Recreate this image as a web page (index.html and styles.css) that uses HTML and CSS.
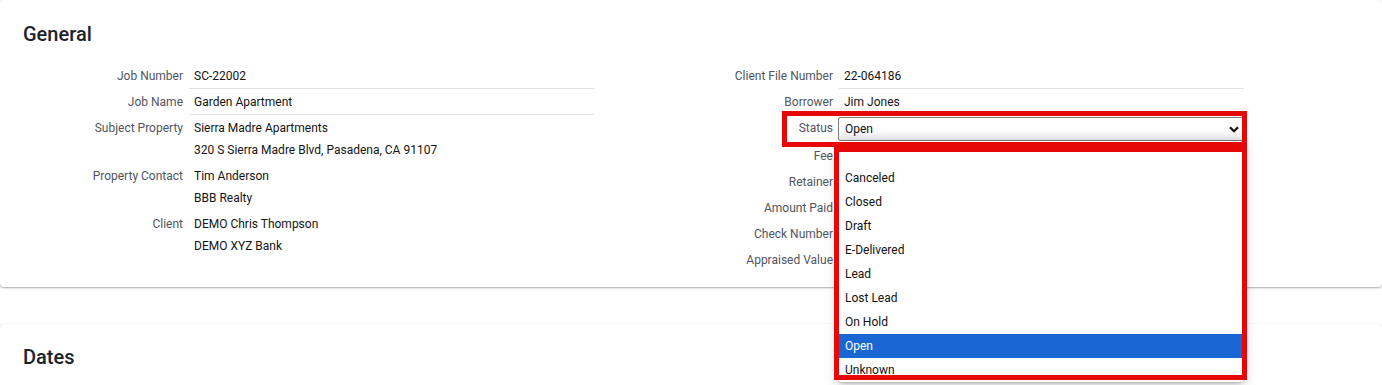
FILE: index.html
```html
<!DOCTYPE html>
<html lang="en">
<head>
<meta charset="utf-8">
<title>Job</title>
<link rel="stylesheet" href="styles.css">
</head>
<body>
<div class="page">
  <section class="card general">
    <h2 class="card-title">General</h2>
    <div class="cols">
      <div class="col">
        <div class="row"><div class="label">Job Number</div><div class="value bordered">SC-22002</div></div>
        <div class="row"><div class="label">Job Name</div><div class="value bordered">Garden Apartment</div></div>
        <div class="row"><div class="label">Subject Property</div><div class="value"><div>Sierra Madre Apartments</div><div>320 S Sierra Madre Blvd, Pasadena, CA 91107</div></div></div>
        <div class="row"><div class="label">Property Contact</div><div class="value"><div>Tim Anderson</div><div>BBB Realty</div></div></div>
        <div class="row"><div class="label">Client</div><div class="value"><div>DEMO Chris Thompson</div><div>DEMO XYZ Bank</div></div></div>
      </div>
      <div class="col">
        <div class="row"><div class="label">Client File Number</div><div class="value bordered">22-064186</div></div>
        <div class="row"><div class="label">Borrower</div><div class="value bordered">Jim Jones</div></div>
        <div class="row"><div class="label">Status</div>
          <div class="value select-cell">
            <div class="select">
              <span>Open</span>
              <svg class="chevron" width="10" height="7" viewBox="0 0 10 7"><path d="M1 1.2 L5 5.2 L9 1.2" fill="none" stroke="#111" stroke-width="2.2"/></svg>
              <ul class="popup">
                <li class="opt">&nbsp;</li>
                <li class="opt">Canceled</li>
                <li class="opt">Closed</li>
                <li class="opt">Draft</li>
                <li class="opt">E-Delivered</li>
                <li class="opt">Lead</li>
                <li class="opt">Lost Lead</li>
                <li class="opt">On Hold</li>
                <li class="opt selected">Open</li>
                <li class="opt">Unknown</li>
              </ul>
            </div>
          </div>
        </div>
        <div class="row"><div class="label">Fee</div><div class="value"></div></div>
        <div class="row"><div class="label">Retainer</div><div class="value"></div></div>
        <div class="row"><div class="label">Amount Paid</div><div class="value"></div></div>
        <div class="row"><div class="label">Check Number</div><div class="value"></div></div>
        <div class="row"><div class="label">Appraised Value</div><div class="value"></div></div>
      </div>
    </div>
  </section>
  <section class="card dates">
    <h2 class="card-title">Dates</h2>
  </section>
  <div class="mark mark-status"></div>
  <div class="mark mark-list"></div>
</div>
</body>
</html>
```
FILE: styles.css
```css
* { box-sizing: border-box; }
html, body { margin: 0; padding: 0; background: #fff; }
body {
  font-family: Roboto, "Liberation Sans", Arial, sans-serif;
  font-size: 12px;
  color: #1a1a1a;
  overflow: hidden;
}
.page { position: relative; height: 385px; }
.card {
  background: #fff;
  border-radius: 4px;
  box-shadow: 0 0 1px rgba(0,0,0,0.12), 0 1px 2px rgba(0,0,0,0.32);
}
.general { padding: 22px 23px 14px; }
.dates { margin-top: 37px; padding: 21px 23px 40px; }
.card-title {
  margin: 0;
  font-size: 20px;
  line-height: 24px;
  font-weight: 500;
  color: #1e2229;
}
.cols {
  margin-top: 17px;
  display: grid;
  grid-template-columns: 571px 571px;
  column-gap: 79px;
}
.row {
  display: grid;
  grid-template-columns: 160px 1fr;
  column-gap: 6px;
  line-height: 22px;
}
.label {
  text-align: right;
  color: #50555f;
  padding: 2px 0;
  white-space: nowrap;
}
.value {
  padding: 2px 5px;
  color: #141414;
  white-space: nowrap;
}
.value.bordered {
  padding-bottom: 1px;
  border-bottom: 1px solid #e2e2e2;
}
.select-cell { padding: 2px 0 2px 0; }
.select {
  position: relative;
  margin-left: -1px;
  width: 406px;
  height: 24px;
  border: 1px solid #7d7d7d;
  border-radius: 2px;
  background: linear-gradient(#ffffff 0%, #ffffff 55%, #ececec 100%);
  padding-left: 6px;
  line-height: 22px;
  color: #111;
}
.chevron { position: absolute; right: 4px; top: 8px; }
.popup {
  position: absolute;
  left: -1px;
  top: 23px;
  width: 406px;
  margin: 0;
  padding: 1px 0 0;
  list-style: none;
  background: #fff;
  border-radius: 0 0 4px 4px;
  box-shadow: 0 3px 14px rgba(0,0,0,0.22), 0 1px 3px rgba(0,0,0,0.2);
  z-index: 5;
}
.opt {
  height: 24px;
  line-height: 24px;
  padding-left: 7px;
  color: #111;
}
.opt.selected { background: #1a67d3; color: #fff; }
.mark {
  position: absolute;
  border: 5px solid #e60707;
  z-index: 10;
}
.mark-status { left: 782px; top: 111px; width: 465px; height: 36px; }
.mark-list { left: 834px; top: 147px; width: 413px; height: 233px; }
```
